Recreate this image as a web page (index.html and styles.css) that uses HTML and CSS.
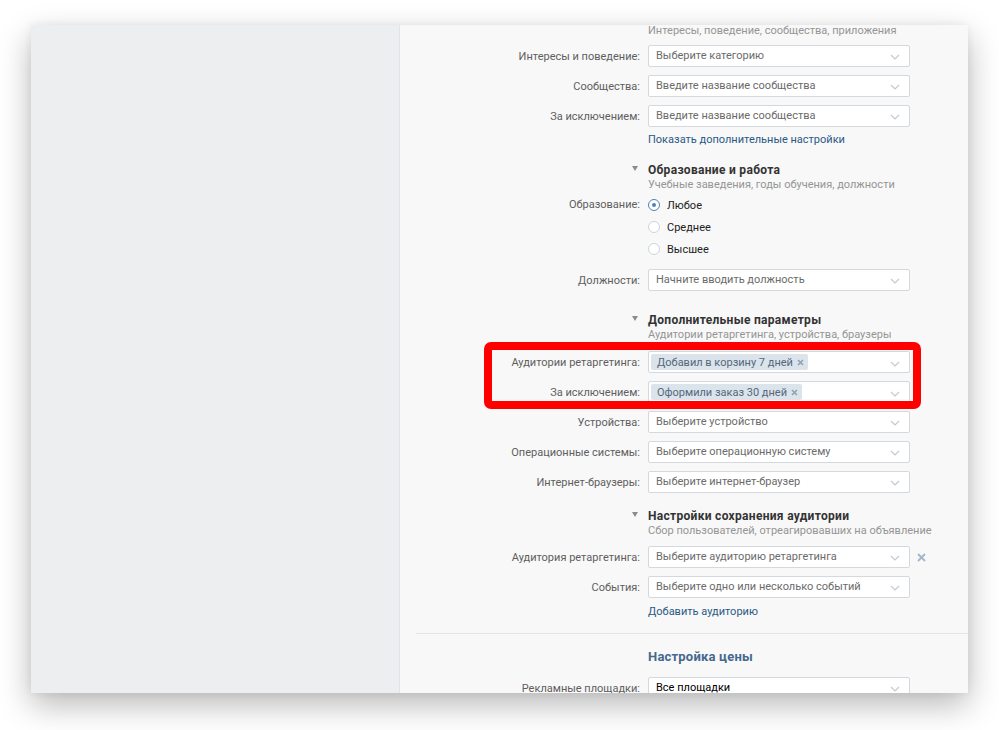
FILE: index.html
```html
<!DOCTYPE html>
<html lang="ru">
<head>
    <meta charset="UTF-8">
    <meta name="viewport" content="width=device-width, initial-scale=1.0">
    <title>Настройки таргетинга</title>
    <link rel="stylesheet" href="styles.css">
</head>
<body>
    <div class="window">
        <aside class="sidebar"></aside>

        <main class="content">
            <div class="form">
                <div class="row first">
                    <span></span>
                    <p class="hint">Интересы, поведение, сообщества, приложения</p>
                </div>
                <div class="row gap-9">
                    <label>Интересы и поведение:</label>
                    <div class="select"><span class="placeholder">Выберите категорию</span><svg class="chevron" width="10" height="6" viewBox="0 0 10 6"><path d="M1 1l4 4 4-4"/></svg></div>
                </div>
                <div class="row gap-8">
                    <label>Сообщества:</label>
                    <div class="select"><span class="placeholder">Введите название сообщества</span><svg class="chevron" width="10" height="6" viewBox="0 0 10 6"><path d="M1 1l4 4 4-4"/></svg></div>
                </div>
                <div class="row gap-8">
                    <label>За исключением:</label>
                    <div class="select"><span class="placeholder">Введите название сообщества</span><svg class="chevron" width="10" height="6" viewBox="0 0 10 6"><path d="M1 1l4 4 4-4"/></svg></div>
                </div>
                <div class="row link-row gap-6">
                    <span></span>
                    <a href="#" class="link">Показать дополнительные настройки</a>
                </div>

                <!-- Education -->
                <div class="row section-title gap-15">
                    <span class="toggle"><i class="triangle"></i></span>
                    <h3>Образование и работа</h3>
                </div>
                <div class="row">
                    <span></span>
                    <p class="hint">Учебные заведения, годы обучения, должности</p>
                </div>
                <div class="row radio-row gap-2">
                    <label class="top">Образование:</label>
                    <div class="radios">
                        <div class="radio checked"><i></i>Любое</div>
                        <div class="radio"><i></i>Среднее</div>
                        <div class="radio"><i></i>Высшее</div>
                    </div>
                </div>
                <div class="row gap-9">
                    <label>Должности:</label>
                    <div class="select"><span class="placeholder">Начните вводить должность</span><svg class="chevron" width="10" height="6" viewBox="0 0 10 6"><path d="M1 1l4 4 4-4"/></svg></div>
                </div>

                <!-- Extra params -->
                <div class="row section-title gap-21">
                    <span class="toggle"><i class="triangle"></i></span>
                    <h3>Дополнительные параметры</h3>
                </div>
                <div class="row">
                    <span></span>
                    <p class="hint">Аудитории ретаргетинга, устройства, браузеры</p>
                </div>
                <div class="highlight gap-9">
                    <div class="row">
                        <label>Аудитории ретаргетинга:</label>
                        <div class="select chips"><span class="chip">Добавил в корзину 7 дней<svg width="7" height="7" viewBox="0 0 7 7"><path d="M1 1l5 5M6 1l-5 5"/></svg></span><svg class="chevron" width="10" height="6" viewBox="0 0 10 6"><path d="M1 1l4 4 4-4"/></svg></div>
                    </div>
                    <div class="row gap-8">
                        <label>За исключением:</label>
                        <div class="select chips"><span class="chip">Оформили заказ 30 дней<svg width="7" height="7" viewBox="0 0 7 7"><path d="M1 1l5 5M6 1l-5 5"/></svg></span><svg class="chevron" width="10" height="6" viewBox="0 0 10 6"><path d="M1 1l4 4 4-4"/></svg></div>
                    </div>
                </div>
                <div class="row gap-8">
                    <label>Устройства:</label>
                    <div class="select"><span class="placeholder">Выберите устройство</span><svg class="chevron" width="10" height="6" viewBox="0 0 10 6"><path d="M1 1l4 4 4-4"/></svg></div>
                </div>
                <div class="row gap-8">
                    <label>Операционные системы:</label>
                    <div class="select"><span class="placeholder">Выберите операционную систему</span><svg class="chevron" width="10" height="6" viewBox="0 0 10 6"><path d="M1 1l4 4 4-4"/></svg></div>
                </div>
                <div class="row gap-8">
                    <label>Интернет-браузеры:</label>
                    <div class="select"><span class="placeholder">Выберите интернет-браузер</span><svg class="chevron" width="10" height="6" viewBox="0 0 10 6"><path d="M1 1l4 4 4-4"/></svg></div>
                </div>

                <!-- Audience saving -->
                <div class="row section-title gap-15">
                    <span class="toggle"><i class="triangle"></i></span>
                    <h3>Настройки сохранения аудитории</h3>
                </div>
                <div class="row">
                    <span></span>
                    <p class="hint">Сбор пользователей, отреагировавших на объявление</p>
                </div>
                <div class="row gap-8">
                    <label>Аудитория ретаргетинга:</label>
                    <div class="select"><span class="placeholder">Выберите аудиторию ретаргетинга</span><svg class="chevron" width="10" height="6" viewBox="0 0 10 6"><path d="M1 1l4 4 4-4"/></svg></div>
                    <svg class="remove" width="9" height="9" viewBox="0 0 9 9"><path d="M1 1l7 7M8 1l-7 7"/></svg>
                </div>
                <div class="row gap-8">
                    <label>События:</label>
                    <div class="select"><span class="placeholder">Выберите одно или несколько событий</span><svg class="chevron" width="10" height="6" viewBox="0 0 10 6"><path d="M1 1l4 4 4-4"/></svg></div>
                </div>
                <div class="row link-row gap-7">
                    <span></span>
                    <a href="#" class="link">Добавить аудиторию</a>
                </div>

                <hr class="divider">

                <!-- Price -->
                <div class="row price-title">
                    <span></span>
                    <h2>Настройка цены</h2>
                </div>
                <div class="row gap-11">
                    <label>Рекламные площадки:</label>
                    <div class="select"><span class="value">Все площадки</span><svg class="chevron" width="10" height="6" viewBox="0 0 10 6"><path d="M1 1l4 4 4-4"/></svg></div>
                </div>
            </div>
        </main>
    </div>
</body>
</html>
```

FILE: styles.css
```css
/* General styling */
body {
    font-family: Roboto, "Liberation Sans", sans-serif;
    font-size: 11px;
    background-color: #fff;
    margin: 0;
    padding: 0;
    min-height: 730px;
}

/* Window */
.window {
    display: flex;
    width: 937px;
    height: 668px;
    margin: 25px 0 0 31px;
    overflow: hidden;
    box-shadow: 0 12px 30px rgba(0,0,0,0.28), 0 0 8px rgba(0,0,0,0.06);
}

.sidebar {
    width: 368px;
    background-color: #edeef0;
    border-right: 1px solid #e1e3e7;
}

.content {
    flex: 1;
    background-color: #f8f8f8;
    overflow: hidden;
}

.form {
    padding-left: 16px;
}

/* Rows */
.row {
    display: grid;
    grid-template-columns: 232px 262px auto;
    align-items: center;
}

.row label {
    color: #5e5e5e;
    text-align: right;
    padding-right: 8px;
    white-space: nowrap;
}

.row label.top {
    align-self: start;
    line-height: 21px;
}

.first { margin-top: 1px; }
.gap-2 { margin-top: 2px; }
.gap-6 { margin-top: 6px; }
.gap-7 { margin-top: 7px; }
.gap-8 { margin-top: 8px; }
.gap-9 { margin-top: 9px; }
.gap-11 { margin-top: 11px; }
.gap-15 { margin-top: 15px; }
.gap-21 { margin-top: 21px; }

.hint {
    margin: 0;
    color: #959595;
    line-height: 14px;
    white-space: nowrap;
}

.first .hint {
    line-height: 10px;
}

.link {
    color: #2a5885;
    text-decoration: none;
    line-height: 14px;
}

/* Section titles */
.section-title h3 {
    margin: 0;
    font-size: 12px;
    font-weight: bold;
    letter-spacing: 0.3px;
    color: #333;
    line-height: 16px;
    white-space: nowrap;
}

.toggle {
    display: flex;
    justify-content: flex-end;
    padding-right: 10px;
    padding-bottom: 3px;
}

.triangle {
    width: 0;
    height: 0;
    border-left: 3px solid transparent;
    border-right: 3px solid transparent;
    border-top: 5px solid #8c8c8c;
}

.price-title {
    margin-top: 14px;
}

.price-title h2 {
    margin: 0;
    font-size: 13px;
    font-weight: bold;
    letter-spacing: 0.2px;
    color: #45688e;
    line-height: 18px;
}

.divider {
    margin: 14px 0 0;
    border: none;
    border-top: 1px solid #e1e4e8;
}

/* Select fields */
.select {
    box-sizing: border-box;
    height: 22px;
    display: flex;
    align-items: center;
    background-color: #fff;
    border: 1px solid #d3d9de;
    border-radius: 2px;
    padding: 0 9px 2px 7px;
}

.placeholder {
    flex: 1;
    color: #6b6b6b;
    white-space: nowrap;
}

.value {
    flex: 1;
    color: #000;
}

.chevron {
    margin-top: 3px;
    fill: none;
    stroke: #c3cad1;
    stroke-width: 1.2;
}

.chips {
    padding: 0 9px 0 2px;
}

.chips .chevron {
    margin-left: auto;
}

.chip {
    display: flex;
    align-items: center;
    gap: 4px;
    height: 16px;
    padding: 0 4px 0 6px;
    background-color: #dbe3eb;
    border-radius: 2px;
    color: #55677d;
    white-space: nowrap;
}

.chip svg {
    fill: none;
    stroke: #8fa1b4;
    stroke-width: 1.6;
}

.remove {
    margin-left: 7px;
    fill: none;
    stroke: #a3b5c8;
    stroke-width: 1.8;
}

/* Radios */
.radios {
    display: flex;
    flex-direction: column;
}

.radio {
    display: flex;
    align-items: center;
    gap: 7px;
    height: 22px;
    color: #222;
}

.radio i {
    box-sizing: border-box;
    width: 12px;
    height: 12px;
    border-radius: 50%;
    border: 1px solid #cdd5dd;
    background-color: #fff;
    display: flex;
    align-items: center;
    justify-content: center;
}

.radio.checked i {
    border-color: #5181b8;
}

.radio.checked i::after {
    content: "";
    width: 4px;
    height: 4px;
    border-radius: 50%;
    background-color: #5181b8;
}

/* Red highlight box */
.highlight {
    position: relative;
}

.highlight::before {
    content: "";
    position: absolute;
    top: -9px;
    left: 68px;
    width: 437px;
    height: 67px;
    box-sizing: border-box;
    border: 8px solid #ff0000;
    border-radius: 7px;
    pointer-events: none;
}
```
